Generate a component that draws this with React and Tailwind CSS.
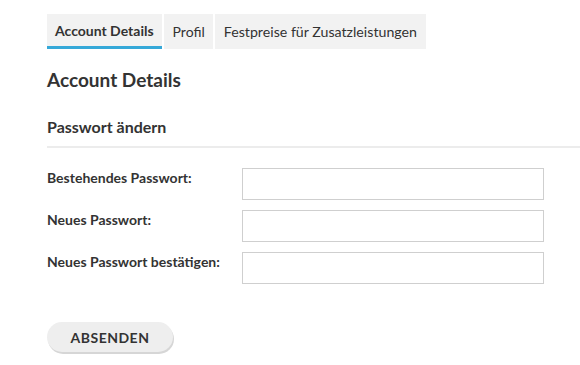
export default function App() {
  const rows = ["Bestehendes Passwort:", "Neues Passwort:", "Neues Passwort bestätigen:"];
  return (
    <div className="w-[580px] h-[365px] bg-white overflow-hidden text-[#333]" style={{ fontFamily: "Lato, 'Liberation Sans', sans-serif" }}>
      <div className="pl-[47px] pt-[14px]">
        <div className="flex gap-[2px]">
          <div className="h-[35px] px-[8px] bg-[#f2f2f2] border-b-[3px] border-[#35a8d8] flex items-center text-[14px] font-bold">Account Details</div>
          <div className="h-[35px] pl-[9px] pr-[8px] bg-[#f2f2f2] flex items-center text-[14px]">Profil</div>
          <div className="h-[35px] pl-[9px] pr-[9px] bg-[#f2f2f2] flex items-center text-[14.2px]">Festpreise für Zusatzleistungen</div>
        </div>
        <h1 className="mt-[19px] text-[19px] font-bold leading-[24px]">Account Details</h1>
        <h2 className="mt-[25px] text-[16px] font-bold leading-[20px]">Passwort ändern</h2>
        <div className="mt-[9px] h-[2px] bg-[#ececec]"></div>
        <div className="mt-[20px] flex flex-col gap-[10px]">
          {rows.map((r) => (
            <div key={r} className="flex">
              <div className="w-[195px] text-[14px] font-bold pt-[1px] leading-[17px]">{r}</div>
              <div className="w-[302px] h-[32px] border border-[#cfcfcf] bg-white"></div>
            </div>
          ))}
        </div>
        <button className="mt-[38px] w-[126px] h-[30px] rounded-full bg-[#eeeeee] text-[14px] font-bold tracking-[0.5px] shadow-[1px_2px_0_#d6d6d6] text-[#333]">ABSENDEN</button>
      </div>
    </div>
  );
}
